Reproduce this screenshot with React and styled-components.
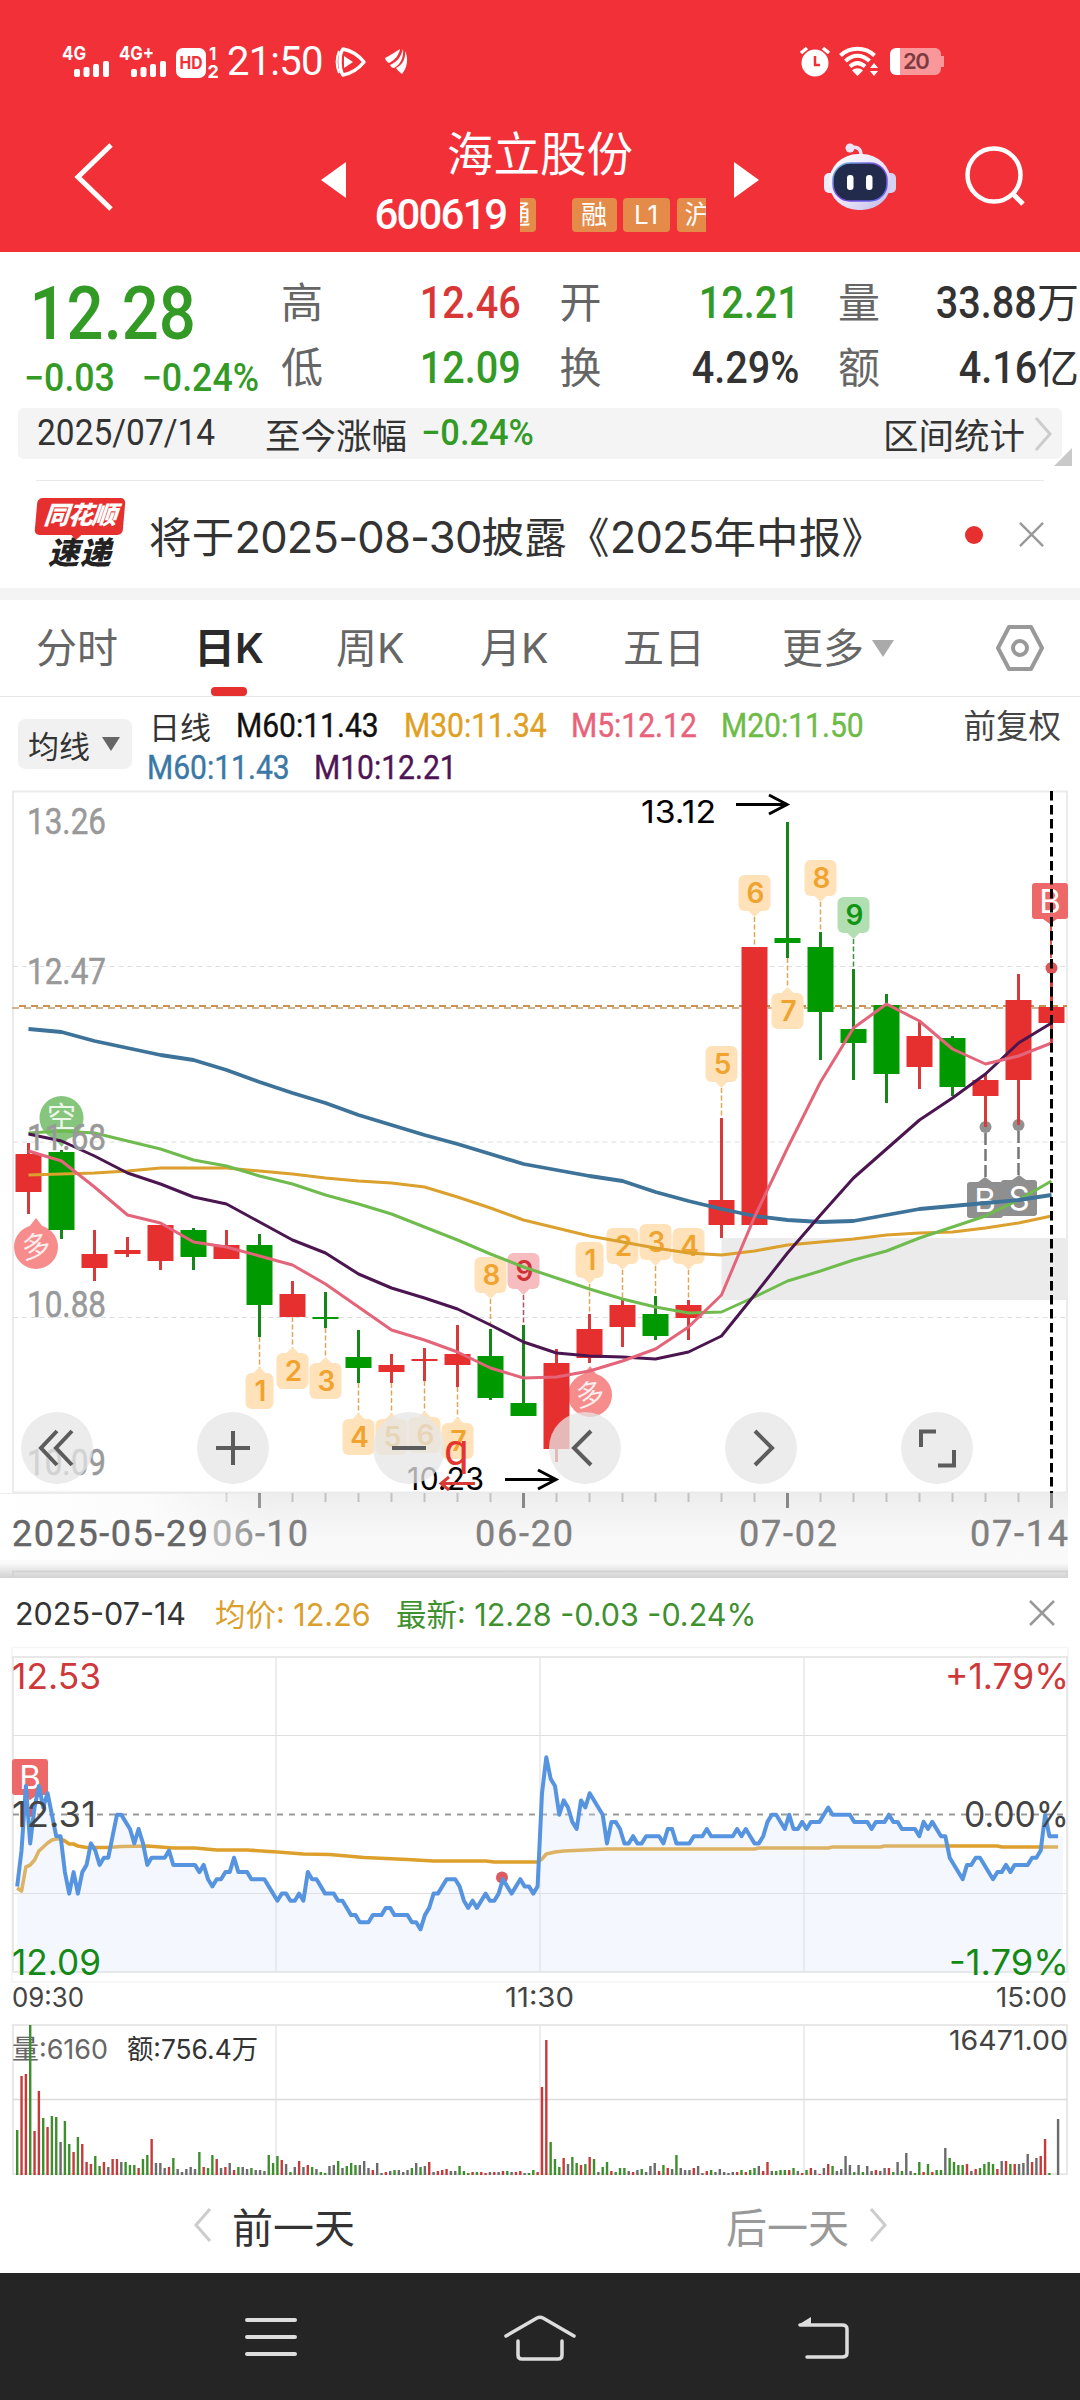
import React from "react"
import styled, { createGlobalStyle } from "styled-components"

const DIN = `Roboto, "Noto Sans CJK SC", sans-serif`
const SANS = `Inter, "Noto Sans CJK SC", sans-serif`

const RED = "#e63030"
const GREEN = "#009a00"

const quoteCells = [
  { label: "高", value: "12.46", color: "#d93636" },
  { label: "开", value: "12.21", color: "#339a26" },
  { label: "量", value: "33.88", unit: "万" },
  { label: "低", value: "12.09", color: "#339a26" },
  { label: "换", value: "4.29%" },
  { label: "额", value: "4.16", unit: "亿" },
]

const tabs = [
  { label: "分时", width: 158 },
  { label: "日K", width: 142, active: true },
  { label: "周K", width: 144 },
  { label: "月K", width: 143 },
  { label: "五日", width: 159 },
  { label: "更多", width: 90 },
]

// body top, body bottom, high, low, colour
const candles = [
  [1154, 1192, 1143, 1214, "r"],
  [1152, 1230, 1150, 1239, "g"],
  [1254, 1268, 1230, 1281, "r"],
  [1250, 1254, 1237, 1257, "r"],
  [1225, 1261, 1225, 1270, "r"],
  [1230, 1257, 1228, 1270, "g"],
  [1245, 1259, 1230, 1259, "r"],
  [1245, 1305, 1234, 1337, "g"],
  [1294, 1317, 1281, 1317, "r"],
  [1317, 1319, 1292, 1328, "g"],
  [1357, 1368, 1330, 1383, "g"],
  [1365, 1372, 1354, 1383, "r"],
  [1359, 1361, 1348, 1381, "r"],
  [1354, 1365, 1325, 1387, "r"],
  [1356, 1398, 1329, 1400, "g"],
  [1403, 1416, 1325, 1416, "g"],
  [1363, 1449, 1349, 1462, "r"],
  [1329, 1358, 1314, 1363, "r"],
  [1305, 1327, 1300, 1347, "r"],
  [1314, 1336, 1296, 1340, "g"],
  [1305, 1318, 1300, 1340, "r"],
  [1200, 1225, 1118, 1238, "r"],
  [947, 1225, 947, 1225, "r"],
  [938, 943, 822, 958, "g"],
  [947, 1012, 932, 1060, "g"],
  [1029, 1043, 969, 1080, "g"],
  [1005, 1074, 994, 1103, "g"],
  [1036, 1067, 1020, 1089, "r"],
  [1038, 1087, 1036, 1096, "g"],
  [1080, 1096, 1074, 1127, "r"],
  [1000, 1080, 974, 1125, "r"],
  [1007, 1023, 968, 1043, "r"],
]

const averages = [
  {
    color: "#dba02d",
    width: 3,
    ys: [1175, 1174, 1173, 1171, 1168, 1168, 1168, 1171, 1174, 1178, 1181, 1183, 1187, 1197, 1208, 1220, 1228, 1236, 1242, 1248, 1253, 1255, 1251, 1245, 1242, 1239, 1235, 1233, 1232, 1228, 1223, 1216],
  },
  {
    color: "#6fbb4e",
    width: 3,
    ys: [1133, 1131, 1133, 1141, 1149, 1160, 1166, 1176, 1184, 1195, 1204, 1214, 1227, 1240, 1254, 1267, 1278, 1289, 1299, 1307, 1313, 1312, 1297, 1281, 1271, 1260, 1251, 1238, 1227, 1216, 1200, 1181],
  },
  {
    color: "#3d7299",
    width: 3.8,
    ys: [1029, 1032, 1041, 1048, 1055, 1060, 1070, 1082, 1093, 1103, 1115, 1125, 1135, 1144, 1154, 1164, 1170, 1176, 1181, 1192, 1201, 1209, 1216, 1220, 1222, 1221, 1215, 1209, 1206, 1203, 1200, 1195],
  },
  {
    color: "#4b1650",
    width: 3,
    ys: [1134, 1141, 1156, 1173, 1184, 1197, 1204, 1222, 1240, 1253, 1274, 1288, 1298, 1309, 1325, 1342, 1353, 1356, 1357, 1359, 1352, 1336, 1295, 1253, 1215, 1178, 1149, 1120, 1098, 1074, 1043, 1023],
  },
  {
    color: "#e4647a",
    width: 3,
    ys: [1151, 1161, 1187, 1215, 1223, 1242, 1247, 1256, 1265, 1284, 1307, 1330, 1340, 1352, 1368, 1378, 1377, 1371, 1361, 1349, 1327, 1295, 1217, 1148, 1082, 1028, 1004, 1021, 1049, 1064, 1056, 1043],
  },
]

// count markers: candle index, number, y of the tag's outer edge, where the lead line meets the candle
const marksAbove = [
  { i: 14, n: 8, y: 1257, to: 1329 },
  { i: 15, n: 9, y: 1253, to: 1325, tone: "pink" },
  { i: 17, n: 1, y: 1242, to: 1314 },
  { i: 18, n: 2, y: 1228, to: 1300 },
  { i: 19, n: 3, y: 1224, to: 1296 },
  { i: 20, n: 4, y: 1228, to: 1300 },
  { i: 21, n: 5, y: 1046, to: 1118 },
  { i: 22, n: 6, y: 875, to: 947 },
  { i: 24, n: 8, y: 860, to: 932 },
  { i: 25, n: 9, y: 897, to: 969, tone: "green" },
]

const marksBelow = [
  { i: 7, n: 1, y: 1368, to: 1337 },
  { i: 8, n: 2, y: 1348, to: 1317 },
  { i: 9, n: 3, y: 1358, to: 1328 },
  { i: 10, n: 4, y: 1414, to: 1383 },
  { i: 11, n: 5, y: 1414, to: 1383 },
  { i: 12, n: 6, y: 1412, to: 1381 },
  { i: 13, n: 7, y: 1418, to: 1387 },
  { i: 23, n: 7, y: 988, to: 958 },
]

const tones = {
  orange: { fill: "#ffe2ba", text: "#f0a32e", line: "#dba85a" },
  green: { fill: "#b2dfb2", text: "#119411", line: "#3c9440" },
  pink: { fill: "#f6bcc0", text: "#cf3136", line: "#a8545c" },
}

// minute of the session, cents away from the previous close
const prices = [
  [0, -10], [1, -5], [2, 4], [3, -4], [4, 1], [5, 4], [6, 1], [7, 3], [8, 0], [9, -3], [10, -3], [11, -8], [12, -11], [13, -8], [14, -11],
  [15, -8], [16, -7], [17, -4], [18, -5], [19, -7], [20, -6], [21, -6], [22, -3], [23, 0], [24, 0], [25, -1], [26, -2], [27, -4], [28, -2],
  [29, -4], [30, -7], [31, -6], [34, -6], [35, -5], [36, -7], [41, -7], [42, -8], [43, -7], [44, -9], [45, -10], [46, -9], [47, -9], [48, -8],
  [49, -8], [50, -6], [51, -8], [53, -8], [54, -9], [57, -9], [58, -10], [60, -12], [61, -11], [62, -11], [63, -12], [64, -12], [65, -11],
  [66, -12], [67, -8], [68, -9], [69, -9], [70, -10], [71, -11], [73, -11], [74, -12], [75, -12], [77, -14], [78, -14], [79, -15], [81, -15],
  [82, -14], [84, -14], [85, -13], [86, -13], [87, -14], [90, -14], [91, -15], [92, -15], [93, -16], [94, -14], [95, -13], [96, -11], [97, -11],
  [99, -9], [101, -9], [102, -10], [103, -12], [104, -13], [105, -12], [106, -13], [108, -11], [109, -12], [110, -12], [111, -11], [112, -9],
  [114, -11], [116, -9], [117, -10], [118, -10], [119, -11], [120, -10], [121, 3], [122, 8], [123, 5], [124, 4], [125, 0], [126, 2], [127, 1],
  [128, -1], [129, -2], [130, 2], [131, 1], [132, 3], [135, 0], [136, -4], [137, -1], [138, -1], [139, -2], [140, -4], [141, -4], [142, -3],
  [143, -4], [144, -4], [145, -3], [148, -3], [149, -4], [150, -2], [151, -2], [152, -4], [155, -4], [156, -3], [158, -3], [159, -2], [160, -3],
  [165, -3], [166, -2], [167, -3], [168, -2], [170, -4], [171, -4], [172, -3], [173, -1], [174, 0], [175, 0], [177, -2], [178, 0], [179, -2],
  [180, -2], [181, -1], [182, -2], [183, -1], [185, -1], [187, 1], [188, 0], [192, 0], [193, -1], [196, -1], [197, -2], [198, -1], [200, -1],
  [201, 0], [202, -1], [203, -1], [204, -2], [207, -2], [208, -3], [209, -1], [210, -2], [211, -1], [213, -3], [214, -3], [215, -6], [218, -9],
  [219, -7], [220, -7], [221, -6], [222, -6], [225, -9], [226, -8], [227, -8], [228, -7], [229, -8], [230, -7], [233, -7], [234, -6], [235, -6],
  [236, -5], [237, 0], [238, -3], [240, -3],
]

const meanPrice = [
  [0, 1888], [1, 1891], [2, 1867], [3, 1865], [4, 1860], [5, 1851], [7, 1843], [8, 1840], [9, 1839], [10, 1839], [11, 1841], [12, 1844],
  [13, 1844], [14, 1846], [16, 1847.5], [21, 1847.5], [24, 1846.5], [30, 1846], [36, 1848], [41, 1848], [46, 1850], [53, 1850], [60, 1852],
  [66, 1854], [72, 1854.5], [80, 1857.5], [90, 1859.5], [96, 1861], [108, 1861], [110, 1862], [120, 1862], [121, 1859], [122, 1854],
  [124, 1852], [126, 1851], [131, 1850], [136, 1849], [170, 1849], [171, 1848], [187, 1848], [188, 1847], [199, 1847], [200, 1846],
  [226, 1846], [227, 1847], [240, 1847],
]

// one bar a minute: r = up, g = down, k = flat
const volumes = (
  "g45 r99 r101 g150 r44 r84 g57 r48 g59 g58 k33 g54 g31 r23 g38 r31 r13 r11 g19 g9 r13 k8 r16 r16 k13 g13 g10 g10 r7 g16 " +
  "g20 r36 k12 k12 k7 r8 g17 k6 k3 k6 k8 k6 g23 r8 g7 g20 r16 k7 r8 k12 r5 g8 k8 k6 g7 k5 k5 k4 g20 g12 " +
  "g19 r15 k11 g3 k8 r14 k8 r10 g8 k6 g3 g2 k9 k10 g14 k7 g9 g12 g10 k10 k14 k7 r5 k12 k2 r3 k4 g5 k5 k3 " +
  "k5 g7 k12 g8 k9 r13 k3 r4 r5 r6 k4 k4 g9 g4 g2 r3 g3 r3 r2 k3 r3 k3 r4 g4 k3 r3 r4 k2 g2 g5 " +
  "r3 r88 r135 g33 g16 g8 r17 k11 g18 g12 r10 g11 r18 g16 k3 g8 g13 r4 g3 g7 g7 k4 r3 k5 g6 k3 k9 k12 r4 g10 " +
  "r7 k6 g20 k7 k5 k5 r7 k9 k2 r4 g5 k3 k6 k3 k2 k3 r3 g5 r3 g5 g7 k9 r4 r13 k4 g4 g5 g5 r5 g7 " +
  "k4 r2 g5 r7 k5 r1 k7 r11 g9 k4 k6 k19 k10 g3 k10 g3 k9 k4 r5 k4 k7 r7 g3 k13 g4 k22 k4 g2 g13 r3 " +
  "g11 r3 g5 g5 k27 g17 g13 g10 g10 r11 k4 r6 g7 g11 g13 g11 r6 k14 r14 g11 r11 k11 k12 k21 r13 k17 r19 r36 g2 k0 k56"
).split(" ")

const volumeColors = { r: "#c53b3b", g: "#3d8f2d", k: "#6b6b6b" }

const candleX = (i) => 28.5 + 33 * i
const minuteX = (m) => 17.2 + 4.337 * m
const priceY = (cents) => 1814.7 - 7.17 * cents

const DayMark = ({ x, y, text, color, up }) => (
  <g>
    <circle cx={x} cy={y} r="22" fill={color} />
    <path d={up ? `M${x - 7} ${y - 20}L${x} ${y - 29}L${x + 7} ${y - 20}z` : `M${x - 7} ${y + 20}L${x} ${y + 29}L${x + 7} ${y + 20}z`} fill={color} />
    <text x={x} y={y + 10} fontSize="29" fill="#fff" textAnchor="middle" fillOpacity="0.85" transform={up ? `rotate(-10 ${x} ${y})` : undefined}>
      {text}
    </text>
  </g>
)

const CountTag = ({ i, n, y, to, tone = "orange", below }) => {
  const x = candleX(i)
  const c = tones[tone]
  const w = n === 1 ? 28 : 32
  const top = below ? y + 5 : y
  return (
    <g>
      <line x1={x} x2={x} y1={below ? to : y + 42} y2={below ? y : to} stroke={c.line} strokeWidth="1.5" strokeDasharray="5 2.5" />
      <rect x={x - w / 2} y={top} width={w} height="36" rx="6" fill={c.fill} />
      <path d={below ? `M${x - 7} ${top + 1}L${x} ${y - 1}L${x + 7} ${top + 1}z` : `M${x - 7} ${y + 35}L${x} ${y + 42}L${x + 7} ${y + 35}z`} fill={c.fill} />
      <text x={x + 1} y={top + 28} fontSize="28" fontWeight="600" fill={c.text} textAnchor="middle">
        {n}
      </text>
    </g>
  )
}

const TradeTag = ({ x, y, text, color, up }) => (
  <g>
    <rect x={x} y={y} width="36" height="36" rx="3" fill={color} />
    <path d={up ? `M${x + 11} ${y}l7 -5l7 5z` : `M${x + 11} ${y + 36}l7 5l7 -5z`} fill={color} />
    <text x={x + 18} y={y + 30} fontSize="33" fill="#fff" textAnchor="middle">
      {text}
    </text>
  </g>
)

const KLineChart = () => (
  <S.Chart viewBox="0 780 1080 798" height="798">
    <defs>
      <linearGradient id="axisShade" x1="0" x2="0" y1="0" y2="1">
        <stop offset="0" stopColor="#ededed" />
        <stop offset="0.5" stopColor="#f8f8f8" />
        <stop offset="0.82" stopColor="#fafafa" />
        <stop offset="1" stopColor="#d2d2d2" />
      </linearGradient>
      <linearGradient id="axisFade">
        <stop offset="0" stopColor="#fff" />
        <stop offset="0.55" stopColor="#fcfcfc" stopOpacity="0.95" />
        <stop offset="1" stopColor="#fafafa" stopOpacity="0" />
      </linearGradient>
    </defs>

    <rect x="0" y="1493" width="1068" height="85" fill="url(#axisShade)" />
    <rect x="13" y="791.5" width="1054" height="701" fill="#fff" stroke="#ebebeb" strokeWidth="2" />
    {[966.5, 1142, 1317.5].map((y) => (
      <line key={y} x1="13" x2="1067" y1={y} y2={y} stroke="#dedede" strokeDasharray="5 3.8" />
    ))}
    <rect x="721.5" y="1238" width="345.5" height="62" fill="#ebebeb" />
    <line x1="19" x2="1067" y1="1006" y2="1006" stroke="#cd8f4e" strokeWidth="2" strokeDasharray="7 5" />
    <line x1="12" x2="1067" y1="1008" y2="1008" stroke="#c09c6c" strokeWidth="1.6" strokeDasharray="7 5" />

    <DayMark x={61.5} y={1118} text="空" color="#86c67c" />
    <DayMark x={36} y={1247} text="多" color="#f68c8c" up />
    <DayMark x={590} y={1395} text="多" color="#f68c8c" up />

    <g stroke="#777" strokeWidth="2.5" strokeDasharray="12 4">
      <line x1="985.5" x2="985.5" y1="1133" y2="1178" />
      <line x1="1018.5" x2="1018.5" y1="1131" y2="1176" />
    </g>
    <circle cx="985.5" cy="1127" r="6" fill="#909090" />
    <circle cx="1018.5" cy="1125" r="6" fill="#909090" />

    {candles.map(([top, bottom, high, low, c], i) => {
      const x = candleX(i)
      return (
        <g key={i}>
          <line x1={x} x2={x} y1={high} y2={low} stroke={c === "r" ? "#d63a3a" : "#16861a"} strokeWidth="3" />
          <rect x={x - 13} y={top} width="26" height={bottom - top} fill={c === "r" ? RED : GREEN} />
        </g>
      )
    })}

    {marksAbove.map((m) => (
      <CountTag key={m.i} {...m} />
    ))}
    {marksBelow.map((m) => (
      <CountTag key={m.i} {...m} below />
    ))}
    <TradeTag x={967} y={1182} text="B" color="#8f8f8f" up />
    <TradeTag x={1001} y={1180} text="S" color="#8f8f8f" up />
    <TradeTag x={1032} y={883} text="B" color="#ed6868" />
    <line x1="1051" x2="1051" y1="924" y2="968" stroke="#dd5555" strokeWidth="2" strokeDasharray="8 5" />
    <circle cx="1051.5" cy="968" r="6" fill="#dd5555" />

    {averages.map((a) => (
      <polyline key={a.color} points={a.ys.map((y, i) => `${candleX(i)},${y}`).join(" ")} fill="none" stroke={a.color} strokeWidth={a.width} strokeLinejoin="round" />
    ))}

    <line x1="1051.5" x2="1051.5" y1="791" y2="1493" stroke="#000" strokeWidth="3" strokeDasharray="9.6 4.4" />

    <g fontSize="36" fontFamily={DIN} fill="#999" stroke="#999" strokeWidth="0.5">
      <text x="27" y="834" textLength="79" lengthAdjust="spacingAndGlyphs">13.26</text>
      <text x="27" y="984" textLength="79" lengthAdjust="spacingAndGlyphs">12.47</text>
      <text x="27" y="1150" textLength="79" lengthAdjust="spacingAndGlyphs">11.68</text>
      <text x="27" y="1317" textLength="79" lengthAdjust="spacingAndGlyphs">10.88</text>
      <text x="27" y="1475" textLength="79" lengthAdjust="spacingAndGlyphs">10.09</text>
    </g>

    <g fontSize="30.5">
      <text x="641" y="823" textLength="75" lengthAdjust="spacingAndGlyphs">13.12</text>
      <text x="407" y="1490" textLength="77" lengthAdjust="spacingAndGlyphs">10.23</text>
    </g>
    <g fill="none" stroke="#000" strokeWidth="3">
      <path d="M736 804.5H787M769 795l18 9.5l-18 9.5" />
      <path d="M505 1479.5H556M538 1470l18 9.5l-18 9.5" />
    </g>
    <text x="444" y="1465" fontSize="44" fontFamily={DIN} fill="#e5352f">q</text>
    <path d="M475 1483.5H442M449 1477l-8 6.5l8 6.5" fill="none" stroke="#d83a38" strokeWidth="3" />

    {candles.map((_, i) => {
      const major = i % 8 === 7
      if (i < 6) return null
      return <line key={i} x1={candleX(i)} x2={candleX(i)} y1="1493" y2={major ? 1508 : 1502} stroke={major ? "#888" : "#c2c2c2"} strokeWidth={major ? 3 : 2} />
    })}
    <g fontSize="36" fontFamily={DIN} fill="#808080" stroke="#808080" strokeWidth="0.4">
      <text x="212" y="1546" textLength="96" lengthAdjust="spacing">06-10</text>
      <text x="475" y="1546" textLength="98" lengthAdjust="spacing">06-20</text>
      <text x="739" y="1546" textLength="98" lengthAdjust="spacing">07-02</text>
      <text x="970" y="1546" textLength="98" lengthAdjust="spacing">07-14</text>
    </g>
    <rect x="0" y="1494" width="275" height="66" fill="url(#axisFade)" />
    <text x="12" y="1546" fontSize="36" fontFamily={DIN} fill="#666" stroke="#666" strokeWidth="0.4" textLength="196" lengthAdjust="spacing">2025-05-29</text>
    <path d="M13 1578V1571.5H1067V1578" fill="none" stroke="#d4d4d4" strokeWidth="2" />
  </S.Chart>
)

const MinuteChart = () => {
  const line = prices.map(([m, c]) => `${minuteX(m).toFixed(1)},${priceY(c).toFixed(1)}`).join(" ")
  return (
    <S.Chart viewBox="0 1644 1080 532" height="532">
      <path d="M12 1982V1647.5H1068V1982z" fill="none" stroke="#f5f5f5" strokeWidth="1.5" />
      <g fill="none" stroke="#e8e8e8" strokeWidth="2">
        <rect x="13" y="1657" width="1054" height="315" />
        <path d="M276 1657V1972M540 1657V1972M804 1657V1972" strokeWidth="1.5" />
        <path d="M13 1735.5H1067M13 1893.5H1067" strokeWidth="1.2" stroke="#dfdfdf" />
      </g>
      <line x1="13" x2="1067" y1="1814.5" y2="1814.5" stroke="#999" strokeWidth="2" strokeDasharray="6 6" />

      <TradeTag x={12} y={1759} text="B" color="#ed6868" />
      <circle cx="30" cy="1812" r="5" fill="#dd5c66" />
      <polyline points={meanPrice.map(([m, y]) => `${minuteX(m)},${y}`).join(" ")} fill="none" stroke="#dea02c" strokeWidth="3.6" strokeLinejoin="round" />
      <polygon points={`${minuteX(0)},1972 ${line} 1063,${priceY(-3)} 1063,1972`} fill="#d9e6fb" fillOpacity="0.28" />
      <circle cx="502" cy="1877.5" r="6" fill="#de5a62" />
      <polyline points={line} fill="none" stroke="#5794e0" strokeWidth="4" strokeLinejoin="round" />

      <g fontSize="35">
        <text x="12" y="1689" fill="#cf3838" textLength="89" lengthAdjust="spacingAndGlyphs">12.53</text>
        <text x="12" y="1827" fill="#444" textLength="84" lengthAdjust="spacingAndGlyphs">12.31</text>
        <text x="12" y="1975" fill="#148a14" textLength="89" lengthAdjust="spacingAndGlyphs">12.09</text>
        <text x="945" y="1689" fill="#cf3838" textLength="124" lengthAdjust="spacingAndGlyphs">+1.79%</text>
        <text x="964" y="1827" fill="#444" textLength="105" lengthAdjust="spacingAndGlyphs">0.00%</text>
        <text x="949" y="1975" fill="#148a14" textLength="120" lengthAdjust="spacingAndGlyphs">-1.79%</text>
      </g>
      <g fontSize="27" fill="#444">
        <text x="12" y="2007" textLength="72" lengthAdjust="spacingAndGlyphs">09:30</text>
        <text x="505" y="2007" textLength="69" lengthAdjust="spacingAndGlyphs">11:30</text>
        <text x="996" y="2007" textLength="71" lengthAdjust="spacingAndGlyphs">15:00</text>
      </g>

      <g fill="none" stroke="#e8e8e8" strokeWidth="2">
        <rect x="13" y="2025" width="1054" height="149" />
        <path d="M276 2025V2174M540 2025V2174M804 2025V2174" strokeWidth="1.5" />
        <path d="M13 2099.5H1067" stroke="#dcdcdc" strokeWidth="1.5" />
      </g>
      <g fontSize="27">
        <text x="12" y="2059" fill="#666" textLength="96" lengthAdjust="spacingAndGlyphs">量:6160</text>
        <text x="127" y="2059" fill="#333" textLength="131" lengthAdjust="spacingAndGlyphs">额:756.4万</text>
        <text x="949" y="2050" fill="#444" textLength="119" lengthAdjust="spacingAndGlyphs">16471.00</text>
      </g>
      {volumes.map((v, m) => {
        const h = Number(v.slice(1))
        return <rect key={m} x={minuteX(m) - 1.2} y={2175 - h} width="2.4" height={h} fill={volumeColors[v[0]]} />
      })}
    </S.Chart>
  )
}

const Signal = ({ label }) => (
  <S.Signal width="48" height="34" viewBox="0 0 48 34">
    <text x="0" y="15" fontSize="19" fontWeight="700" fill="#fff" textLength={label.length > 2 ? 35 : 24} lengthAdjust="spacingAndGlyphs">
      {label}
    </text>
    <rect x="12" y="24" width="6" height="8" rx="2" fill="#fff" />
    <rect x="21.5" y="22" width="6" height="10" rx="2" fill="#fff" />
    <rect x="31" y="19" width="6" height="13" rx="2" fill="#fff" />
    <rect x="41" y="16" width="6" height="16" rx="2" fill="#fff" />
  </S.Signal>
)

const StatusBar = () => (
  <S.StatusBar>
    <Signal label="4G" />
    <Signal label="4G+" />
    <svg width="42" height="34" viewBox="0 0 42 34">
      <rect x="0" y="3" width="30" height="30" rx="7" fill="#fff" />
      <text x="3.5" y="24" fontSize="18" fontWeight="700" fill="#f23038" textLength="23" lengthAdjust="spacingAndGlyphs">HD</text>
      <text x="33" y="15" fontSize="17" fontWeight="700" fill="#fff">1</text>
      <text x="31.5" y="32.5" fontSize="18" fontWeight="700" fill="#fff">2</text>
    </svg>
    <S.Clock>21:50</S.Clock>
    <svg width="30" height="32" viewBox="0 0 30 32">
      <path d="M7 3C3 8 3 23 7 29C17 27 24 21 28 16C24 11 17 5 7 3z" fill="none" stroke="#fff" strokeWidth="3.5" strokeLinejoin="round" />
      <path d="M3 5C0 12 0 20 3 27" fill="none" stroke="#fff" strokeWidth="2" />
      <path d="M8 10L17 16L8 22z" fill="#fff" />
    </svg>
    <S.Wing width="24" height="28" viewBox="0 0 24 28" fill="#fff">
      <path d="M15 1C10 4 4 8 0 10C1 13 2 14 4 15C10 12 14 7 15 1z" />
      <path d="M18 1C16 9 12 14 5 17C6 19 7 20 9 20C15 17 19 10 18 1z" />
      <path d="M20 3C21 11 17 17 11 20C13 23 15 24 17 26C22 20 24 11 20 3z" />
    </S.Wing>
    <svg width="32" height="32" viewBox="0 0 32 32">
      <circle cx="16" cy="17" r="13.5" fill="#fff" />
      <path d="M2 7L8 2M24 2L30 7" stroke="#fff" strokeWidth="3.5" />
      <path d="M16 10V19H21" fill="none" stroke="#f23038" strokeWidth="2.5" />
    </svg>
    <S.Wifi width="40" height="30" viewBox="0 0 40 30">
      <g fill="none" stroke="#fff" strokeWidth="4">
        <path d="M1.5 8.5C11 -0.5 26 -0.5 35.5 8.5" />
        <path d="M6.5 14C14 7 23 7 30.5 14" />
        <path d="M11 19.5C16 15 21 15 26 19.5" />
      </g>
      <path d="M13 23.5C16.5 20.5 20.5 20.5 24 23.5L18.5 29z" fill="#fff" />
      <path d="M31 21l4 -5l4 5zM31 24l4 5l4 -5z" fill="#fff" />
    </S.Wifi>
    <S.Battery>20</S.Battery>
  </S.StatusBar>
)

const Robot = () => (
  <svg width="74" height="70" viewBox="0 0 74 70">
    <defs>
      <linearGradient id="shell" x1="0" y1="0" x2="1" y2="1">
        <stop offset="0" stopColor="#fff" />
        <stop offset="0.6" stopColor="#e6e0f8" />
        <stop offset="1" stopColor="#b9b4e6" />
      </linearGradient>
      <linearGradient id="rim" x1="0" y1="0" x2="1" y2="1">
        <stop offset="0" stopColor="#6ec3e6" />
        <stop offset="0.5" stopColor="#7a44d8" />
        <stop offset="1" stopColor="#5a6cf0" />
      </linearGradient>
    </defs>
    <path d="M27 6C33 4 38 6 38 13" fill="none" stroke="#eadff5" strokeWidth="3.5" />
    <circle cx="27" cy="6" r="4.5" fill="#efe3f6" />
    <rect x="1" y="31" width="12" height="20" rx="5" fill="#f0ebfb" />
    <rect x="60" y="31" width="13" height="20" rx="5" fill="#d6d0f2" />
    <rect x="6" y="12" width="62" height="56" rx="29" fill="url(#shell)" />
    <rect x="10" y="21" width="54" height="38" rx="17" fill="#232b4c" stroke="url(#rim)" strokeWidth="1.5" />
    <rect x="24" y="33" width="6.5" height="15" rx="3" fill="#fff" />
    <rect x="43" y="33" width="6.5" height="15" rx="3" fill="#fff" />
  </svg>
)

const Chevron = ({ left, width = 19, height = 34, color = "#ccc", stroke = 3 }) => (
  <svg width={width} height={height} viewBox={`0 0 ${width} ${height}`}>
    <path
      d={left ? `M${width - 2} 1L3 ${height / 2}L${width - 2} ${height - 1}` : `M2 1L${width - 3} ${height / 2}L2 ${height - 1}`}
      fill="none"
      stroke={color}
      strokeWidth={stroke}
    />
  </svg>
)

const Cross = ({ size }) => (
  <svg width={size} height={size} viewBox="0 0 26 26">
    <path d="M1 1L25 25M25 1L1 25" stroke="#999" strokeWidth="2.5" />
  </svg>
)

const ChartTools = () => (
  <S.Tools>
    <S.Tool>
      <path d="M36 19L20 36L36 53M51 19L35 36L51 53" />
    </S.Tool>
    <S.Tool>
      <path d="M36 19V53M19 36H53" />
    </S.Tool>
    <S.Tool>
      <path d="M19 36H53" />
    </S.Tool>
    <S.Tool>
      <path d="M42 19L25 36L42 53" />
    </S.Tool>
    <S.Tool>
      <path d="M30 19L47 36L30 53" />
    </S.Tool>
    <S.Tool>
      <path d="M20 35V19.5H35M53 38V53.5H37" />
    </S.Tool>
  </S.Tools>
)

const App = () => (
  <S.Page>
    <GlobalStyle />
    <S.Header>
      <StatusBar />
      <S.TitleBar>
        <Chevron left width={38} height={66} color="#fff" stroke={5} />
        <S.TitleBlock>
          <S.Arrow viewBox="0 0 26 36">
            <path d="M25 0V36L0 18z" fill="#fff" />
          </S.Arrow>
          <S.Title>
            <S.StockName>海立股份</S.StockName>
            <S.CodeRow>
              <S.Code>600619</S.Code>
              <S.Tags>
                <S.Tag $cut="left" $width={16}>通</S.Tag>
                <S.Tag $width={45} $gap={36}>融</S.Tag>
                <S.Tag $width={47} $gap={6}>L1</S.Tag>
                <S.Tag $cut="right" $width={29} $gap={7}>沪</S.Tag>
              </S.Tags>
            </S.CodeRow>
          </S.Title>
          <S.Arrow viewBox="0 0 26 36">
            <path d="M1 0V36L26 18z" fill="#fff" />
          </S.Arrow>
        </S.TitleBlock>
        <Robot />
        <S.Search width="62" height="62" viewBox="0 0 62 62">
          <circle cx="29" cy="29" r="26.5" fill="none" stroke="#fff" strokeWidth="4.5" />
          <path d="M47 47L58 58" stroke="#fff" strokeWidth="5" />
        </S.Search>
      </S.TitleBar>
    </S.Header>

    <S.Quote>
      <S.PriceBlock>
        <S.Price>12.28</S.Price>
        <S.Changes>
          <span>−0.03</span>
          <span>−0.24%</span>
        </S.Changes>
      </S.PriceBlock>
      <S.Grid>
        {quoteCells.map((c) => (
          <S.Cell key={c.label}>
            <S.CellLabel>{c.label}</S.CellLabel>
            <S.CellValue $color={c.color}>
              <S.Digits>{c.value}</S.Digits>
              {c.unit}
            </S.CellValue>
          </S.Cell>
        ))}
      </S.Grid>
    </S.Quote>

    <S.RangeBar>
      <S.RangeDate>2025/07/14</S.RangeDate>
      <S.RangeLabel>至今涨幅</S.RangeLabel>
      <S.RangeChange>−0.24%</S.RangeChange>
      <S.RangeLink>区间统计</S.RangeLink>
      <Chevron />
      <S.Corner />
    </S.RangeBar>

    <S.Notice>
      <S.Brand>
        <S.BrandTop>同花顺</S.BrandTop>
        <S.BrandBottom>速递</S.BrandBottom>
      </S.Brand>
      <S.NoticeText>
        将于<b>2025-08-30</b>披露《<b>2025</b>年中报》
      </S.NoticeText>
      <S.Dot />
      <Cross size={25} />
    </S.Notice>

    <S.Tabs>
      {tabs.map((t) => (
        <S.Tab key={t.label} $width={t.width} $active={t.active}>
          <span>{t.label}</span>
        </S.Tab>
      ))}
      <S.Caret $size={22} $color="#aaa" />
      <S.Settings width="50" height="48" viewBox="0 0 50 48" fill="none" stroke="#999" strokeWidth="4">
        <path d="M14 3H36L47 24L36 45H14L3 24z" strokeLinejoin="round" />
        <circle cx="25" cy="24" r="7" />
      </S.Settings>
    </S.Tabs>

    <S.Legend>
      <S.MaButton>
        均线
        <S.Caret $size={18} $color="#666" />
      </S.MaButton>
      <S.LegendRows>
        <S.LegendRow>
          <S.LegendTitle>日线</S.LegendTitle>
          <S.Ma $color="#111" $width={168}>M60:11.43</S.Ma>
          <S.Ma $color="#e0a022" $width={167}>M30:11.34</S.Ma>
          <S.Ma $color="#e8627a" $width={150}>M5:12.12</S.Ma>
          <S.Ma $color="#6ebb48" $width={160}>M20:11.50</S.Ma>
        </S.LegendRow>
        <S.LegendRow>
          <S.Ma $color="#3a78a6" $width={167}>M60:11.43</S.Ma>
          <S.Ma $color="#4e1555" $width={160}>M10:12.21</S.Ma>
        </S.LegendRow>
      </S.LegendRows>
      <S.Adjust>前复权</S.Adjust>
    </S.Legend>

    <S.ChartArea>
      <KLineChart />
      <ChartTools />
    </S.ChartArea>

    <S.SheetHead>
      <S.SheetText $color="#333" $width={200}>2025-07-14</S.SheetText>
      <S.SheetText $color="#dba02c" $width={181}>均价: 12.26</S.SheetText>
      <S.SheetText $color="#3f9130">最新: 12.28 -0.03 -0.24%</S.SheetText>
      <Cross size={26} />
    </S.SheetHead>
    <MinuteChart />

    <S.DayNav>
      <S.DayLink $color="#333">
        <Chevron left />
        前一天
      </S.DayLink>
      <S.DayLink $color="#999">
        后一天
        <Chevron />
      </S.DayLink>
    </S.DayNav>

    <S.SystemBar>
      <svg width="52" height="44" viewBox="0 0 52 44">
        <path d="M2 5H50M2 22H50M2 39H50" stroke="#ddd" strokeWidth="4" strokeLinecap="round" />
      </svg>
      <S.Home width="72" height="46" viewBox="0 0 72 46" fill="none" stroke="#ddd" strokeWidth="3.5" strokeLinecap="round" strokeLinejoin="round">
        <path d="M2 21L33 3Q36 1.5 39 3L70 21M14 26V40Q14 44 18 44H54Q58 44 58 40V26" />
      </S.Home>
      <svg width="54" height="46" viewBox="0 0 54 46" fill="none" stroke="#ddd" strokeWidth="3.5" strokeLinecap="round">
        <path d="M4 10H46Q51 10 51 14V38Q51 42 46 42H11" />
        <path d="M2 10L15 2V10z" fill="#ddd" stroke="none" />
      </svg>
    </S.SystemBar>
  </S.Page>
)

export default App

const GlobalStyle = createGlobalStyle`
  body {
    margin: 0;
    background: #fff;
  }
  svg {
    flex: none;
    display: block;
    overflow: visible;
  }
`

const S = {
  Page: styled.div`
    width: 1080px;
    height: 2400px;
    overflow: hidden;
    display: flex;
    flex-direction: column;
    font-family: ${SANS};
    white-space: nowrap;
    color: #333;
  `,
  Header: styled.header`
    height: 252px;
    background: #f23038;
  `,
  StatusBar: styled.div`
    display: flex;
    align-items: center;
    padding: 24px 0 0 62px;
    box-sizing: border-box;
    height: 99px;
  `,
  Signal: styled.svg`
    margin-right: 9px;
  `,
  Clock: styled.div`
    width: 109px;
    margin-left: 9px;
    font: 400 40px/40px ${DIN};
    color: #fff;
    letter-spacing: -0.8px;
  `,
  Wing: styled.svg`
    margin: 0 390px 0 19px;
  `,
  Wifi: styled.svg`
    margin: 0 11px 0 8px;
  `,
  Battery: styled.div`
    position: relative;
    width: 51px;
    height: 27px;
    box-sizing: border-box;
    padding-left: 13px;
    border-radius: 6px;
    background: linear-gradient(90deg, #fff 10px, #f9979b 10px);
    font: 600 22px/27px ${SANS};
    letter-spacing: -1.5px;
    color: #7b3b40;
    &::after {
      content: "";
      position: absolute;
      right: -3px;
      top: 8px;
      width: 3px;
      height: 11px;
      background: #f9979b;
    }
  `,
  TitleBar: styled.div`
    display: flex;
    align-items: center;
    height: 155px;
    padding-left: 75px;
  `,
  TitleBlock: styled.div`
    display: flex;
    align-items: center;
    width: 438px;
    margin: 6px 64px 0 208px;
    justify-content: space-between;
    height: 146px;
  `,
  Arrow: styled.svg`
    width: 26px;
    height: 36px;
  `,
  Title: styled.div`
    display: flex;
    flex-direction: column;
    align-items: center;
    width: 330px;
  `,
  StockName: styled.div`
    font-size: 46.5px;
    line-height: 64px;
    font-weight: 400;
    color: #fff;
  `,
  CodeRow: styled.div`
    display: flex;
    align-items: center;
    height: 36px;
    margin-top: 11px;
    margin-bottom: 5px;
  `,
  Code: styled.div`
    width: 145px;
    font: 500 42px/36px ${DIN};
    color: #fff;
    letter-spacing: -1.9px;
  `,
  Tags: styled.div`
    display: flex;
    width: 186px;
  `,
  Tag: styled.div`
    display: flex;
    justify-content: ${({ $cut }) => ($cut === "left" ? "flex-end" : $cut === "right" ? "flex-start" : "center")};
    width: ${({ $width }) => $width}px;
    height: 34px;
    box-sizing: border-box;
    padding: ${({ $cut }) => ($cut === "left" ? "0 5px 0 0" : $cut === "right" ? "0 0 0 8px" : "0")};
    margin-left: ${({ $gap }) => $gap || 0}px;
    overflow: hidden;
    border-radius: ${({ $cut }) => ($cut === "left" ? "0 4px 4px 0" : $cut === "right" ? "4px 0 0 4px" : "4px")};
    background: #e58b4a;
    font-size: 26px;
    line-height: 34px;
    color: #fff;
  `,
  Search: styled.svg`
    margin-left: 68px;
  `,
  Quote: styled.section`
    display: flex;
    height: 156px;
    padding: 18px 0 0 26px;
    box-sizing: border-box;
  `,
  PriceBlock: styled.div`
    width: 255px;
    color: #339a26;
    font-family: ${DIN};
    font-weight: 500;
  `,
  Price: styled.div`
    padding-left: 4px;
    font-size: 75px;
    line-height: 86px;
    transform: scaleX(0.87);
    transform-origin: left;
  `,
  Changes: styled.div`
    display: flex;
    justify-content: space-between;
    width: 250px;
    font-size: 38px;
    line-height: 44px;
    transform: scaleX(0.94);
    transform-origin: left;
    margin-left: -2px;
  `,
  Grid: styled.div`
    display: grid;
    grid-template-columns: 240px 240px 241px;
    grid-auto-rows: 65px;
    column-gap: 38.5px;
    flex: none;
  `,
  Cell: styled.div`
    display: flex;
    align-items: center;
    justify-content: space-between;
  `,
  CellLabel: styled.span`
    font-size: 42px;
    line-height: 65px;
    color: #666;
  `,
  CellValue: styled.span`
    display: flex;
    align-items: center;
    font-size: 42px;
    line-height: 65px;
    color: ${({ $color }) => $color || "#333"};
  `,
  Digits: styled.span`
    font: 500 45px/65px ${DIN};
    transform: scaleX(0.88);
    transform-origin: right;
  `,
  RangeBar: styled.div`
    position: relative;
    display: flex;
    align-items: center;
    height: 51px;
    margin: 0 18px;
    padding: 0 9px 0 19px;
    border-radius: 6px;
    background: #f4f4f4;
    font-size: 35.5px;
  `,
  RangeDate: styled.span`
    width: 228px;
    font: 400 36px/51px ${DIN};
    transform: scaleX(0.93);
    transform-origin: left;
  `,
  RangeLabel: styled.span`
    width: 156px;
  `,
  RangeChange: styled.span`
    flex: 1;
    font: 500 36px/51px ${DIN};
    color: #339a26;
    transform: scaleX(0.955);
    transform-origin: left;
  `,
  RangeLink: styled.span`
    margin-right: 9px;
  `,
  Corner: styled.i`
    position: absolute;
    right: -10px;
    bottom: -7px;
    border-left: 18px solid transparent;
    border-bottom: 18px solid #c9c9c9;
  `,
  Notice: styled.div`
    display: flex;
    align-items: center;
    height: 108px;
    margin: 21px 36px 0;
    position: relative;
    box-sizing: border-box;
    border-top: 1px solid #e8e8e8;
  `,
  Brand: styled.div`
    width: 88px;
    margin-right: 25px;
    text-align: center;
    font-style: italic;
    font-weight: 900;
  `,
  BrandTop: styled.div`
    height: 37px;
    border-radius: 5px;
    background: ${RED};
    transform: skewX(-5deg);
    color: #fff;
    font-size: 25px;
    line-height: 35px;
    letter-spacing: -1px;
    &::after {
      content: "";
      position: absolute;
      left: 36px;
      top: 36px;
      border: 6px solid transparent;
      border-top-color: ${RED};
    }
  `,
  BrandBottom: styled.div`
    font-size: 31px;
    line-height: 36px;
    letter-spacing: 1px;
    color: #222;
  `,
  NoticeText: styled.div`
    flex: 1;
    font-size: 42.5px;
    letter-spacing: 0.2px;
    b {
      font-weight: 400;
      font-size: 43.5px;
      letter-spacing: -0.8px;
    }
  `,
  Dot: styled.i`
    width: 18px;
    height: 18px;
    margin-right: 36px;
    border-radius: 50%;
    background: ${RED};
  `,
  Tabs: styled.nav`
    display: flex;
    align-items: center;
    height: 109px;
    padding-left: 36px;
    box-sizing: border-box;
    border-top: 12px solid #f4f4f4;
    border-bottom: 1px solid #e6e6e6;
  `,
  Tab: styled.div`
    width: ${({ $width }) => $width}px;
    font-size: 41px;
    font-weight: ${({ $active }) => ($active ? 600 : 400)};
    color: ${({ $active }) => ($active ? "#2a2a2a" : "#666")};
    line-height: 96px;
    span {
      position: relative;
      display: inline-block;
    }
    span::after {
      content: "";
      display: ${({ $active }) => ($active ? "block" : "none")};
      position: absolute;
      left: calc(50% - 18px);
      bottom: 0;
      width: 36px;
      height: 9px;
      border-radius: 4px;
      background: ${RED};
    }
  `,
  Caret: styled.i`
    width: 0;
    border: ${({ $size }) => $size / 2}px solid transparent;
    border-top: ${({ $size }) => $size * 0.8}px solid ${({ $color }) => $color};
    border-bottom: 0;
  `,
  Settings: styled.svg`
    margin-left: 101px;
  `,
  Legend: styled.div`
    display: flex;
    height: 83px;
    padding: 12px 19px 0 18px;
    box-sizing: border-box;
  `,
  MaButton: styled.div`
    display: flex;
    align-items: center;
    justify-content: space-between;
    width: 114px;
    height: 50px;
    margin: 10px 15px 0 0;
    padding: 0 12px 0 10px;
    box-sizing: border-box;
    border-radius: 8px;
    background: #f1f1f1;
    font-size: 31px;
  `,
  LegendRows: styled.div`
    flex: 1;
  `,
  LegendRow: styled.div`
    display: flex;
    align-items: center;
    height: 41px;
    margin-top: -4px;
    & + & {
      margin-top: 1px;
    }
  `,
  LegendTitle: styled.span`
    width: 87px;
    padding-left: 2px;
    font-size: 31px;
  `,
  Ma: styled.span`
    width: ${({ $width }) => $width}px;
    font: 400 33px/40px ${DIN};
    -webkit-text-stroke: 0.4px;
    color: ${({ $color }) => $color};
    transform: scaleX(0.91);
    transform-origin: left;
  `,
  Adjust: styled.span`
    font-size: 32.5px;
    line-height: 36px;
    color: #444;
  `,
  ChartArea: styled.div`
    position: relative;
  `,
  Chart: styled.svg`
    width: 1080px;
    font-family: ${SANS};
  `,
  Tools: styled.div`
    position: absolute;
    left: 21px;
    top: 632px;
    display: flex;
    gap: 104px;
  `,
  Tool: styled.svg.attrs({ viewBox: "0 0 72 72" })`
    width: 72px;
    height: 72px;
    border-radius: 50%;
    background: rgba(230, 230, 230, 0.75);
    fill: none;
    stroke: #5c5c5c;
    stroke-width: 4;
  `,
  SheetHead: styled.div`
    display: flex;
    align-items: center;
    height: 66px;
    padding: 4px 25px 0 15px;
    box-sizing: border-box;
    > svg {
      margin-left: auto;
    }
  `,
  SheetText: styled.span`
    width: ${({ $width }) => ($width ? $width + "px" : "auto")};
    font-size: 30.5px;
    color: ${({ $color }) => $color};
  `,
  DayNav: styled.div`
    display: flex;
    justify-content: space-between;
    height: 97px;
    padding: 0 192px 0 193px;
  `,
  DayLink: styled.div`
    display: flex;
    align-items: center;
    gap: 20px;
    font-size: 41px;
    color: ${({ $color }) => $color};
  `,
  Home: styled.svg`
    margin-right: 13px;
  `,
  SystemBar: styled.footer`
    display: flex;
    flex: 1;
    justify-content: space-between;
    padding: 42px 230px 0 245px;
    background: #252525;
  `,
}
